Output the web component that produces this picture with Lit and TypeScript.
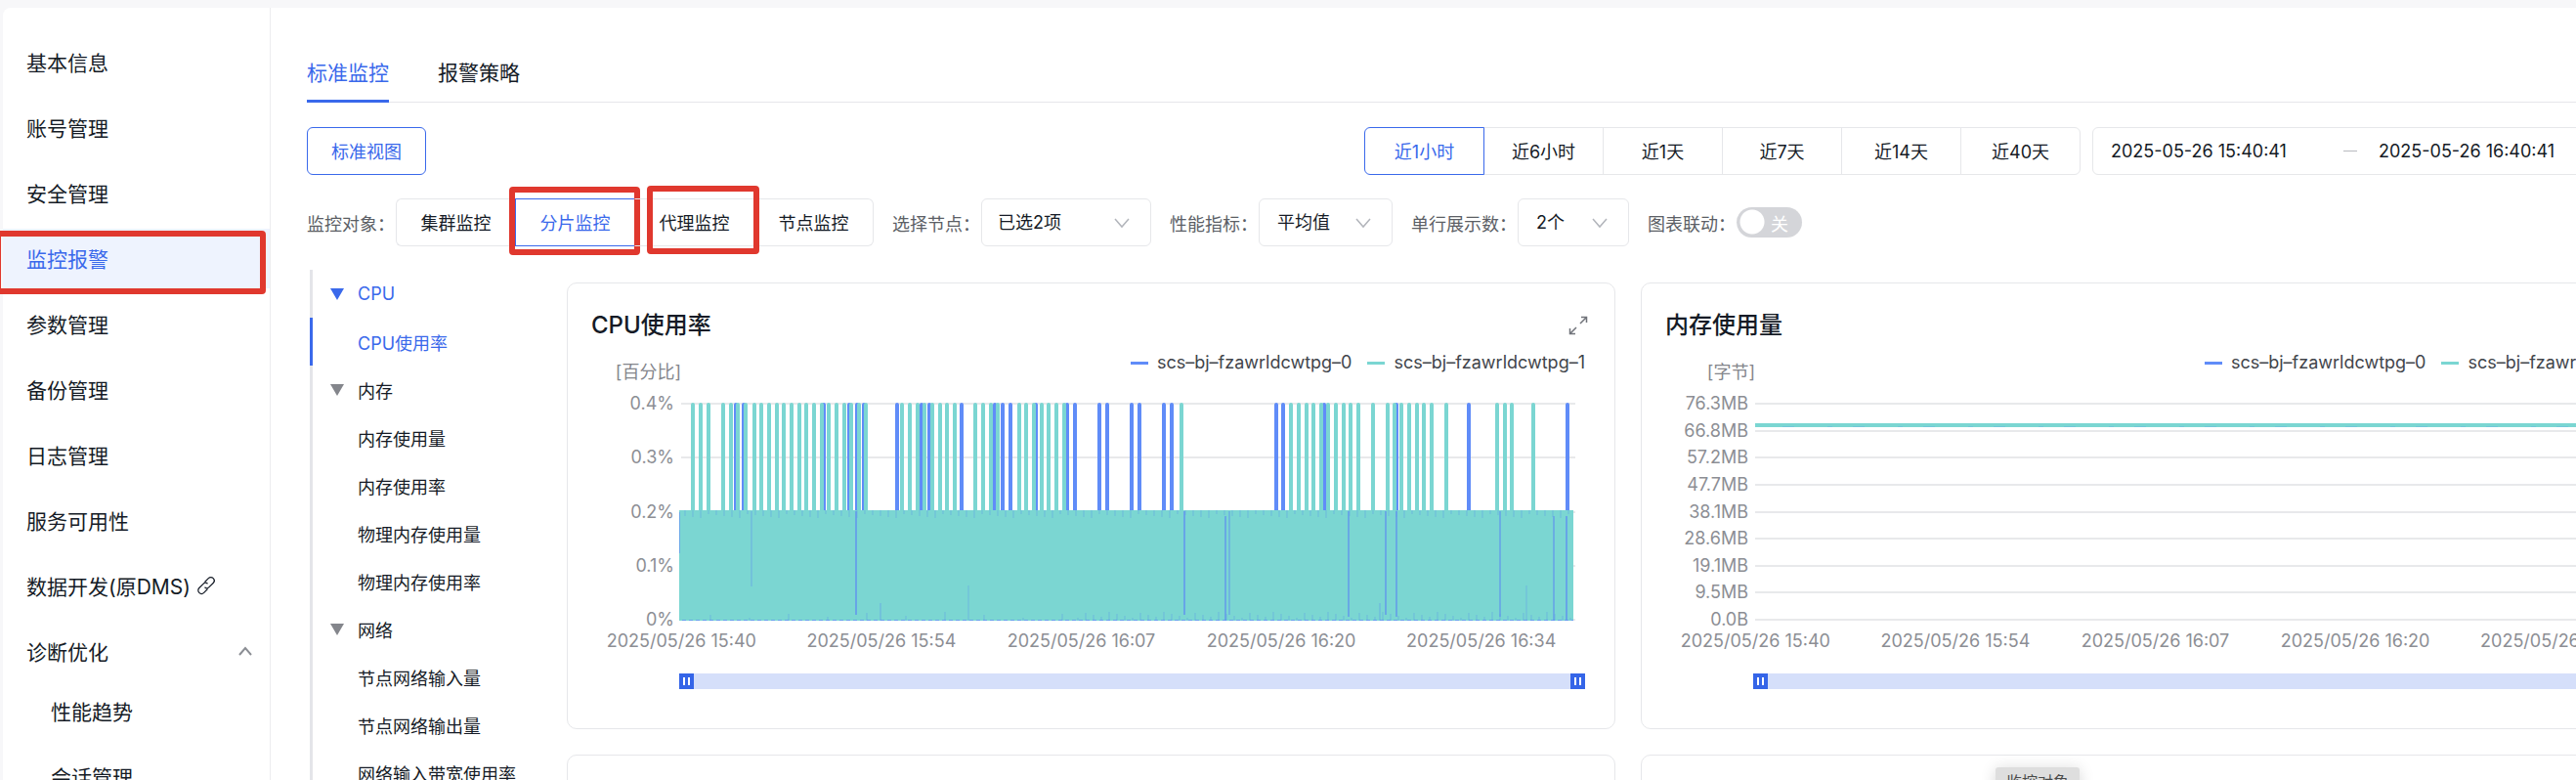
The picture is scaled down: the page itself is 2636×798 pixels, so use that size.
import { LitElement, html, css, svg, nothing } from "lit";
import { customElement, property, state } from "lit/decorators.js";
import { classMap } from "lit/directives/class-map.js";

const chevronDown = html`<svg class="chev" width="18" height="12" viewBox="0 0 18 12" aria-hidden="true">
  <path d="M2 2l7 8 7-8" fill="none" stroke="#b2b5bb" stroke-width="1.5" />
</svg>`;

const BLUE_PEAKS = [
  753, 761, 843, 869, 877, 884, 918, 943, 951, 984, 1018, 1026, 1034, 1060, 1092, 1100, 1125, 1133, 1158,
  1166, 1191, 1199, 1306, 1313, 1355, 1429, 1503, 1604,
];
const TEAL_PEAKS = [
  709, 717, 725, 740, 748, 755, 763, 772, 779, 787, 795, 802, 810, 818, 825, 833, 841, 848, 856, 864, 871,
  879, 886, 923, 931, 939, 946, 954, 962, 969, 977, 998, 1006, 1014, 1021, 1043, 1050, 1058, 1066, 1073,
  1081, 1089, 1209, 1321, 1329, 1337, 1344, 1352, 1359, 1367, 1375, 1382, 1390, 1405, 1420, 1427, 1434,
  1442, 1450, 1457, 1465, 1480, 1532, 1540, 1547, 1569,
];
/* x, top, bottom, opacity of the first series showing through the filled band */
const DIPS: number[][] = [
  [769, 120, 197, 0.4], [876, 120, 226, 1], [901, 214, 232, 0.4], [991, 196, 232, 0.3],
  [1212, 120, 226, 1], [1254, 125, 232, 0.9], [1258, 120, 226, 0.6], [1380, 120, 228, 0.9],
  [1418, 120, 226, 0.9], [1429, 120, 228, 0.9], [1535, 120, 228, 0.8], [1590, 125, 232, 0.8],
  [1603, 125, 232, 1], [1412, 214, 232, 0.4], [1562, 196, 232, 0.3],
];
const ORIGIN = 697;

@customElement("metric-card")
class MetricCard extends LitElement {
  @property() name = "";
  @property() unit = "";
  @property() kind = "";
  @property({ attribute: false }) ticks: string[] = [];

  static styles = css`
    :host {
      display: block;
      box-sizing: border-box;
      min-width: 0;
      border: 1px solid #e6e7ea;
      border-radius: 10px;
      padding: 25px 30px 40px 14px;
      background: #fff;
    }
    .head {
      display: flex;
      justify-content: space-between;
      align-items: center;
      margin: 0 -3px 0 10px;
    }
    h2 {
      margin: 0;
      font-size: 24px;
      line-height: 36px;
      font-weight: 500;
      color: #151b26;
    }
    .expand {
      border: 0;
      padding: 0;
      background: none;
      width: 20px;
      height: 20px;
      color: #70737a;
    }
    .expand svg {
      display: block;
    }
    .sub {
      display: flex;
      justify-content: space-between;
      height: 30px;
      margin: 10px 0 12px;
      line-height: 20px;
      font-size: 18px;
    }
    .unit {
      width: 102px;
      align-self: flex-end;
      text-align: right;
      color: #84868c;
      white-space: nowrap;
    }
    .legend {
      display: flex;
      gap: 16px;
      color: #42454b;
    }
    .key {
      display: flex;
      align-items: center;
      height: 20px;
      gap: 9px;
      white-space: nowrap;
    }
    .key i {
      width: 18px;
      height: 3px;
      background: #608cf8;
    }
    .key.second i {
      background: #7bd6d2;
    }
    .plot {
      display: flex;
      height: 241px;
      margin-right: 10px;
    }
    .axis {
      flex: none;
      width: 95px;
      margin-right: 5px;
      display: flex;
      flex-direction: column;
      justify-content: space-between;
      text-align: right;
      font-size: 18px;
      line-height: 20px;
      color: #8c8e94;
    }
    .plot svg {
      flex: 1;
      min-width: 0;
      height: 241px;
      display: block;
    }
    .times {
      display: grid;
      grid-template-columns: repeat(5, 1fr);
      margin-right: 4px;
      text-align: center;
      white-space: nowrap;
      font-size: 18px;
      line-height: 24px;
      color: #8c8e94;
    }
    .zoom {
      display: flex;
      margin: 21px 0 0 100px;
      height: 16px;
      background: #d5dffa;
    }
    .zoom input {
      appearance: none;
      flex: 1;
      min-width: 0;
      height: 16px;
      margin: 0;
      background: none;
    }
    .zoom input::-webkit-slider-thumb {
      appearance: none;
      width: 15px;
      height: 16px;
      background: linear-gradient(#fff, #fff) 4px 4px / 2px 8px no-repeat,
        linear-gradient(#fff, #fff) 9px 4px / 2px 8px no-repeat, #3565e8;
    }
  `;

  private grid() {
    const n = this.ticks.length - 1;
    return this.ticks.map((_, i) => {
      const y = Math.round(10 + (221 * i) / n);
      return svg`<rect x="2" y=${y - 1} width="915" height="2" fill="#e8e9eb" />`;
    });
  }

  private cpu() {
    const peaks = (xs: number[]) => xs.map((x) => `M${x - ORIGIN + 2} 122V11`).join("");
    const nibs: string[] = [];
    const feet: string[] = [];
    for (let x = 6; x < 912; x += 8) {
      nibs.push(`M${x} 119v${4 + ((x * 7) % 5)}`);
      if (x > 400 || x % 5 === 0) feet.push(`M${x + 2} 232v-${3 + ((x * 5) % 7)}`);
    }
    return svg`
      <path d=${peaks(BLUE_PEAKS)} stroke="#608cf8" stroke-width="4" stroke-linecap="round" />
      <path d=${peaks(TEAL_PEAKS)} stroke="#7bd6d2" stroke-width="4" stroke-linecap="round" />
      <rect x="0" y="119" width="915" height="113" fill="#7bd6d2" />
      <path d="M0 121V163" stroke="#608cf8" stroke-width="2" opacity=".6" />
      <path d=${nibs.join("")} stroke="#5f9fe6" stroke-width="1" opacity=".5" />
      <path d=${feet.join("")} stroke="#5f9fe6" stroke-width="1" opacity=".5" />
      <path d="M3 231.500H915" stroke="#608cf8" stroke-width="1" stroke-dasharray="4 3" opacity=".7" />
      ${DIPS.map(
        (d) => svg`<path d="M${d[0] - ORIGIN + 2} ${d[1]}V${d[2]}" stroke="#6095ee" stroke-width="1.500" opacity=${d[3]} />`
      )}`;
  }

  private memory() {
    return svg`<path d="M2 32H917" stroke="#7bd6d2" stroke-width="4" />
      <path d="M30 33.500H917" stroke="#69b4e6" stroke-width="1" stroke-dasharray="12 34 5 21" opacity=".4" />`;
  }

  render() {
    return html`
      <div class="head">
        <h2>${this.name}</h2>
        <button class="expand" aria-label="全屏">
          <svg width="20" height="20" viewBox="0 0 20 20" fill="none" stroke="currentColor" stroke-width="1.5">
            <path d="M12 8l6.500-6.500M13 1.500h5.500V7M8 12l-6.500 6.500M1.500 13v5.500H7" />
          </svg>
        </button>
      </div>
      <div class="sub">
        <span class="unit">${this.unit}</span>
        <div class="legend">
          <span class="key"><i></i>scs–bj–fzawrldcwtpg–0</span>
          <span class="key second"><i></i>scs–bj–fzawrldcwtpg–1</span>
        </div>
      </div>
      <div class="plot">
        <div class="axis">${this.ticks.map((t) => html`<span>${t}</span>`)}</div>
        <svg viewBox="0 0 917 241" preserveAspectRatio="none" role="img" aria-label=${this.name}>
          ${this.grid()} ${this.kind === "cpu" ? this.cpu() : this.memory()}
        </svg>
      </div>
      <div class="times">
        ${["15:40", "15:54", "16:07", "16:20", "16:34"].map((t) => html`<span>2025/05/26 ${t}</span>`)}
      </div>
      <div class="zoom">
        <input type="range" aria-label="开始时间" min="0" max="100" value="0" />
        <input type="range" aria-label="结束时间" min="0" max="100" value="100" />
      </div>
    `;
  }
}

@customElement("app-root")
class AppRoot extends LitElement {
  @state() private scope = "分片监控";
  @state() private span = "近1小时";

  static styles = css`
    :host {
      display: flex;
      box-sizing: border-box;
      height: 100vh;
      overflow: hidden;
      padding: 8px 0 0 3px;
      background: #f7f7f9;
      color: #151b26;
      font-family: Inter, "Noto Sans CJK SC", sans-serif;
      font-size: 18px;
    }
    button,
    select,
    input {
      font: inherit;
      color: inherit;
    }
    a {
      color: inherit;
      text-decoration: none;
    }
    .side {
      flex: none;
      box-sizing: border-box;
      width: 274px;
      border-right: 1px solid #ececef;
      border-radius: 8px 0 0 0;
      background: #fff;
      padding-top: 25px;
      font-size: 21px;
    }
    .side ul,
    .tree {
      list-style: none;
      margin: 0;
      padding: 0;
    }
    .side li {
      margin-bottom: 6px;
    }
    .link {
      position: relative;
      display: flex;
      align-items: center;
      box-sizing: border-box;
      height: 61px;
      padding: 0 17px 2px 24px;
      white-space: nowrap;
    }
    .link.on {
      background: #eef3fe;
      color: #3a69eb;
    }
    .link.sub {
      padding-left: 49px;
    }
    .link .hook {
      margin-left: 6px;
    }
    .link .fold {
      margin-left: auto;
    }
    .side li.open {
      margin-bottom: 0;
    }
    .mark {
      position: absolute;
      border: 6px solid #e0382e;
      border-radius: 4px;
      z-index: 3;
      pointer-events: none;
    }
    .mark.nav {
      inset: 2px 4px -6px -8px;
    }
    .mark.shard {
      inset: -13px -6px -10px -7px;
    }
    .mark.proxy {
      inset: -14px -6px -9px 12px;
    }
    .main {
      flex: 1;
      min-width: 0;
      margin-right: -116px;
      padding: 52px 0 0 37px;
      background: #fff;
    }
    .tabs {
      display: flex;
      gap: 50px;
      border-bottom: 1px solid #e6e7ea;
      font-size: 21px;
      line-height: 30px;
    }
    .tab {
      border: 0;
      border-bottom: 3px solid transparent;
      background: none;
      padding: 0 0 12px;
      margin-bottom: -1px;
    }
    .tab.on {
      color: #3a69eb;
      border-color: #3a69eb;
    }
    .row {
      display: flex;
      height: 49px;
    }
    .first {
      margin: 25px 0 24px;
      gap: 12px;
    }
    .view {
      width: 122px;
      margin-right: auto;
      border: 1px solid #3a69eb;
      border-radius: 6px;
      background: #fff;
      color: #3a69eb;
      padding: 0 0 2px;
    }
    .seg {
      display: flex;
    }
    .seg button {
      position: relative;
      box-sizing: border-box;
      width: 123px;
      height: 49px;
      margin-right: -1px;
      padding: 0 0 2px;
      border: 1px solid #e6e7ea;
      background: #fff;
      white-space: nowrap;
    }
    .seg button:first-child {
      border-radius: 6px 0 0 6px;
    }
    .seg button:last-child {
      border-radius: 0 6px 6px 0;
      margin-right: 0;
    }
    .seg button.on {
      z-index: 1;
      color: #3a69eb;
      border-color: #3a69eb;
    }
    .seg button.front {
      z-index: 2;
    }
    .seg.plain button {
      border-left-color: transparent;
      border-right-color: transparent;
      background: none;
    }
    .seg.plain button:first-child {
      border-left-color: #e6e7ea;
    }
    .seg.plain button:last-child {
      border-right-color: #e6e7ea;
    }
    .seg.plain button.on {
      border-color: #3a69eb;
    }
    .range {
      box-sizing: border-box;
      width: 611px;
      display: flex;
      align-items: center;
      border: 1px solid #e6e7ea;
      border-radius: 6px;
      padding-left: 18px;
    }
    .range input {
      box-sizing: border-box;
      border: 0;
      padding: 0;
      width: 238px;
      background: none;
    }
    .range i {
      width: 14px;
      height: 1px;
      margin-right: 22px;
      background: #b8babf;
    }
    .filters {
      gap: 19px;
      align-items: center;
      margin-bottom: 24px;
    }
    .field {
      display: flex;
      align-items: center;
      gap: 1px;
    }
    .field .cap {
      color: #5c5f66;
      white-space: nowrap;
    }
    .pick {
      position: relative;
      display: flex;
      align-items: center;
    }
    .pick select {
      appearance: none;
      box-sizing: border-box;
      height: 49px;
      border: 1px solid #e6e7ea;
      border-radius: 6px;
      background: #fff;
      padding: 0 18px;
    }
    .nodes select {
      width: 174px;
      padding-left: 16px;
    }
    .stat select {
      width: 137px;
    }
    .cols select {
      width: 114px;
    }
    .chev {
      position: absolute;
      right: 21px;
      pointer-events: none;
    }
    .switch {
      position: relative;
      display: flex;
      align-items: center;
    }
    .switch input {
      appearance: none;
      margin: 0;
      width: 67px;
      height: 31px;
      border-radius: 16px;
      background: radial-gradient(circle at 16px 15px, #fff 12px, #d4d5d9 13px);
    }
    .switch span {
      position: absolute;
      right: 14px;
      color: #fff;
      pointer-events: none;
    }
    .body {
      display: grid;
      grid-template-columns: 266px minmax(0, 1fr);
      align-items: start;
    }
    .tree {
      margin-left: 3px;
    }
    .tree a {
      display: flex;
      align-items: center;
      box-sizing: border-box;
      height: 49px;
      border-left: 3px solid #e4e5e9;
      padding-left: 46px;
      white-space: nowrap;
    }
    .tree a.group {
      padding-left: 18px;
      gap: 14px;
    }
    .tree a.group svg {
      color: #84868c;
    }
    .tree a.cur,
    .tree a.cur svg {
      color: #3a69eb;
    }
    .tree a.cur:not(.group) {
      border-color: #3a69eb;
    }
    .cards {
      display: grid;
      grid-template-columns: 1fr 1fr;
      gap: 26px;
      margin-top: 13px;
    }
    .panel {
      position: relative;
      box-sizing: border-box;
      min-height: 457px;
      border: 1px solid #e6e7ea;
      border-radius: 10px;
    }
    .ghost {
      position: absolute;
      z-index: 4;
      top: 12px;
      left: 362px;
      padding: 0 11px;
      border-radius: 3px;
      background: #dedede;
      box-shadow: 0 2px 16px rgba(0, 0, 0, 0.16);
      color: #4a4a4a;
      font-size: 16px;
      line-height: 30px;
      white-space: nowrap;
    }
  `;

  private treeRow(text: string, group = false, cur = false) {
    return html`<li>
      <a href="#" class=${classMap({ group, cur })}>
        ${group
          ? html`<svg width="14" height="12" viewBox="0 0 14 12" aria-hidden="true"><path d="M0 0h14L7 12z" fill="currentColor" /></svg>`
          : nothing}${text}</a>
    </li>`;
  }

  render() {
    const items = ["基本信息", "账号管理", "安全管理", "监控报警", "参数管理", "备份管理", "日志管理", "服务可用性"];
    const scopes = ["集群监控", "分片监控", "代理监控", "节点监控"];
    const spans = ["近1小时", "近6小时", "近1天", "近7天", "近14天", "近40天"];
    return html`
      <nav class="side">
        <ul>
          ${items.map((t) => {
            const on = t === "监控报警";
            return html`<li>
              <a href="#" class=${classMap({ link: true, on })}>${t}${on ? html`<span class="mark nav"></span>` : nothing}</a>
            </li>`;
          })}
          <li>
            <a href="#" class="link">数据开发(原DMS)
              <svg class="hook" width="20" height="20" viewBox="0 0 20 20" fill="none" stroke="currentColor" stroke-width="1.2" aria-hidden="true">
                <path d="M8.500 6.500l3.800-3.900a3.400 3.400 0 0 1 4.900 4.900l-4.200 4.200a3.200 3.200 0 0 1-4.500 0" />
                <path d="M11.500 13.500l-3.800 3.900a3.400 3.400 0 0 1-4.900-4.900L7 8.300a3.200 3.200 0 0 1 4.500 0" />
              </svg></a>
          </li>
          <li class="open">
            <a href="#" class="link">诊断优化
              <svg class="fold" width="16" height="10" viewBox="0 0 16 10" aria-hidden="true">
                <path d="M2 9l6-7 6 7" fill="none" stroke="#8b8e94" stroke-width="2" />
              </svg></a>
            <ul>
              <li><a href="#" class="link sub">性能趋势</a></li>
              <li><a href="#" class="link sub">会话管理</a></li>
            </ul>
          </li>
        </ul>
      </nav>
      <main class="main">
        <div class="tabs" role="tablist">
          <button class="tab on" role="tab" aria-selected="true">标准监控</button>
          <button class="tab" role="tab" aria-selected="false">报警策略</button>
        </div>
        <div class="row first">
          <button class="view">标准视图</button>
          <div class="seg">
            ${spans.map(
              (t) => html`<button class=${classMap({ on: t === this.span })} @click=${() => (this.span = t)}>${t}</button>`
            )}
          </div>
          <div class="range">
            <input type="text" aria-label="开始时间" value="2025-05-26 15:40:41" />
            <i></i>
            <input type="text" aria-label="结束时间" value="2025-05-26 16:40:41" />
          </div>
        </div>
        <div class="row filters">
          <div class="field">
            <span class="cap">监控对象：</span>
            <div class="seg plain">
              ${scopes.map(
                (t, i) => html`<button
                  class=${classMap({ on: t === this.scope, front: i === 2 })}
                  @click=${() => (this.scope = t)}
                >${t}${i === 1 ? html`<span class="mark shard"></span>` : i === 2 ? html`<span class="mark proxy"></span>` : nothing}</button>`
              )}
            </div>
          </div>
          <div class="field nodes">
            <label class="cap" for="nodes">选择节点：</label>
            <div class="pick"><select id="nodes"><option>已选2项</option></select>${chevronDown}</div>
          </div>
          <div class="field stat">
            <label class="cap" for="stat">性能指标：</label>
            <div class="pick"><select id="stat"><option>平均值</option></select>${chevronDown}</div>
          </div>
          <div class="field cols">
            <label class="cap" for="cols">单行展示数：</label>
            <div class="pick"><select id="cols"><option>2个</option></select>${chevronDown}</div>
          </div>
          <div class="field">
            <label class="cap" for="sync">图表联动：</label>
            <div class="switch"><input id="sync" type="checkbox" role="switch" /><span>关</span></div>
          </div>
        </div>
        <div class="body">
          <ul class="tree">
            ${this.treeRow("CPU", true, true)} ${this.treeRow("CPU使用率", false, true)}
            ${this.treeRow("内存", true)}
            ${["内存使用量", "内存使用率", "物理内存使用量", "物理内存使用率"].map((t) => this.treeRow(t))}
            ${this.treeRow("网络", true)}
            ${["节点网络输入量", "节点网络输出量", "网络输入带宽使用率"].map((t) => this.treeRow(t))}
          </ul>
          <div class="cards">
            <metric-card name="CPU使用率" unit="[百分比]" kind="cpu" .ticks=${["0.4%", "0.3%", "0.2%", "0.1%", "0%"]}></metric-card>
            <metric-card
              name="内存使用量"
              unit="[字节]"
              kind="memory"
              .ticks=${["76.3MB", "66.8MB", "57.2MB", "47.7MB", "38.1MB", "28.6MB", "19.1MB", "9.5MB", "0.0B"]}
            ></metric-card>
            <div class="panel"></div>
            <div class="panel"><span class="ghost">监控对象</span></div>
          </div>
        </div>
      </main>
    `;
  }
}
